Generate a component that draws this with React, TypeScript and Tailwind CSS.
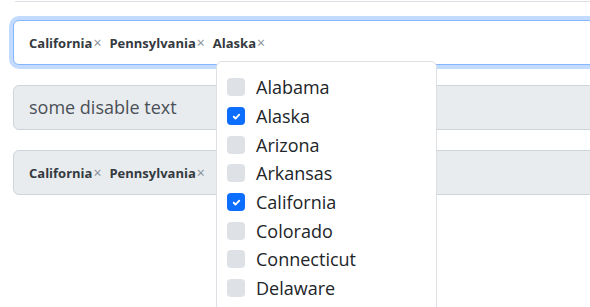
const STATES = [
  { name: "Alabama", checked: false },
  { name: "Alaska", checked: true },
  { name: "Arizona", checked: false },
  { name: "Arkansas", checked: false },
  { name: "California", checked: true },
  { name: "Colorado", checked: false },
  { name: "Connecticut", checked: false },
  { name: "Delaware", checked: false },
];

const FONT = "font-['Segoe_UI','Open_Sans','Noto_Sans',sans-serif]";

function Tag({ label }: { label: string }) {
  return (
    <span className="inline-flex items-baseline mr-[8px]">
      <span className="text-[13px] font-bold text-[#343a40]">{label}</span>
      <span className="text-[14px] text-[#868e96] ml-[1px]">×</span>
    </span>
  );
}

function Checkbox({ checked }: { checked: boolean }) {
  if (checked) {
    return (
      <span className="flex h-[18px] w-[18px] shrink-0 items-center justify-center rounded-[4px] bg-[#0d6efd]">
        <svg width="11" height="11" viewBox="0 0 20 20" fill="none">
          <path
            d="M5 10.5l3.2 3.2 6.8-7"
            stroke="#fff"
            strokeWidth="3.4"
            strokeLinecap="round"
            strokeLinejoin="round"
          />
        </svg>
      </span>
    );
  }
  return (
    <span className="h-[18px] w-[18px] shrink-0 rounded-[4px] bg-[#dee2e6]" />
  );
}

export default function App() {
  return (
    <div className={`relative h-[307px] w-full overflow-hidden bg-white ${FONT}`}>
      <div className="w-[640px] pl-[13px]">
        {/* bottom edge of a field scrolled out of view */}
        <div className="h-[2px] ml-[2px] border-b border-[#dcdfe3]" />

        <div className="mt-[18px] flex h-[45px] items-center rounded-[6px] border border-[#86b7fe] bg-white px-[15px] shadow-[0_0_0_4px_#c2dbfe]">
          <Tag label="California" />
          <Tag label="Pennsylvania" />
          <Tag label="Alaska" />
        </div>

        <div className="mt-[20px] flex h-[45px] items-center rounded-[6px] border border-[#ced4da] bg-[#e9ecef] px-[15px]">
          <span className="text-[18px] text-[#495057]">some disable text</span>
        </div>

        <div className="mt-[20px] flex h-[45px] items-center rounded-[6px] border border-[#ced4da] bg-[#e9ecef] px-[15px]">
          <Tag label="California" />
          <Tag label="Pennsylvania" />
        </div>
      </div>

      {/* dropdown menu */}
      <div className="absolute left-[216px] top-[61px] w-[221px] rounded-t-[6px] border border-[#dcdfe3] bg-white pt-[11px] pl-[10px]">
        {STATES.map((s) => (
          <div key={s.name} className="flex h-[28.7px] items-center gap-[11px]">
            <Checkbox checked={s.checked} />
            <span className="text-[18px] leading-none text-[#212529]">{s.name}</span>
          </div>
        ))}
        {/* next option, cut off by the window */}
        <div className="flex h-[28.7px] items-center">
          <Checkbox checked={false} />
        </div>
      </div>
    </div>
  );
}
